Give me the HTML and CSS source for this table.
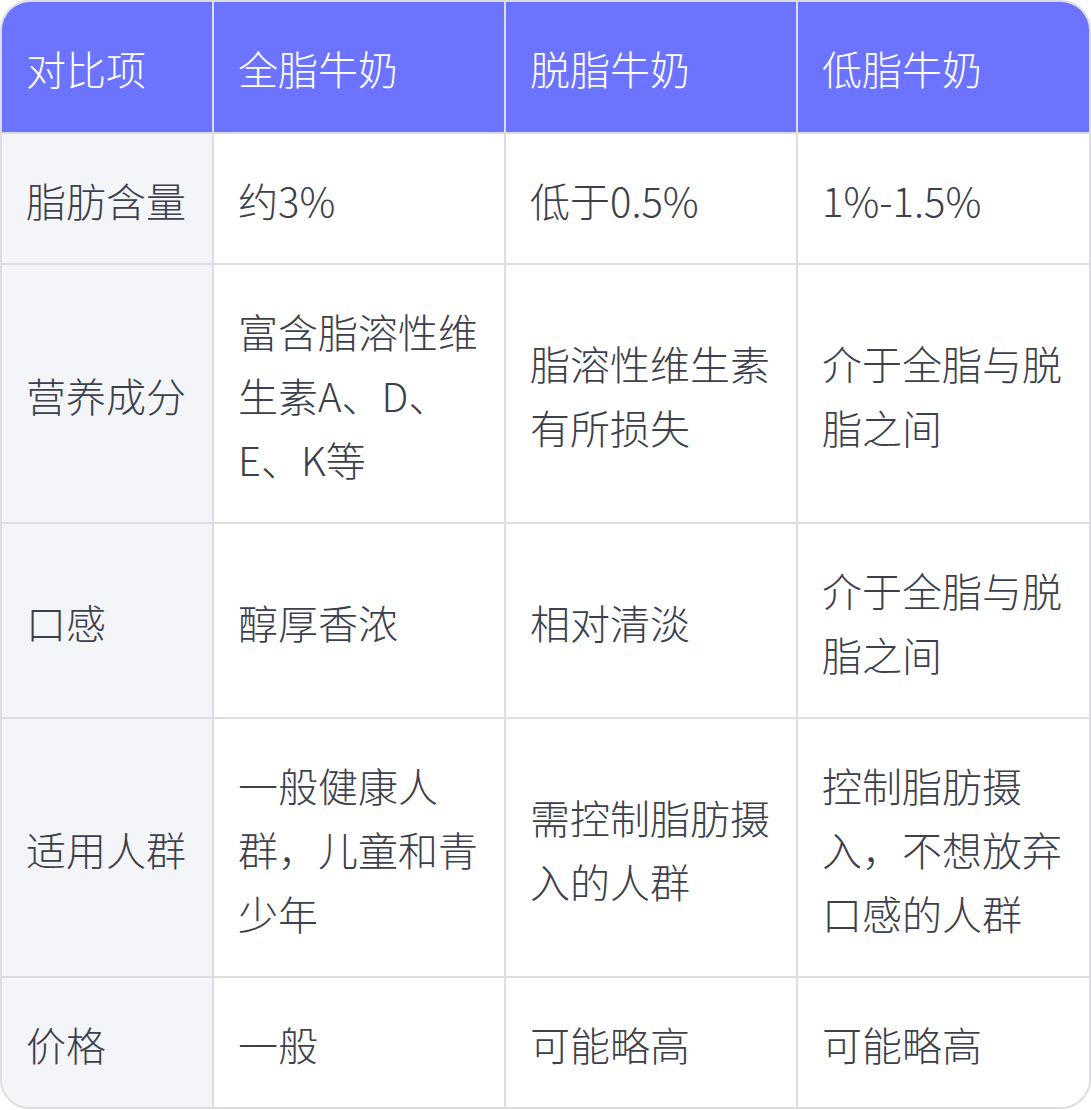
FILE: index.html
```html
<!DOCTYPE html>
<html lang="zh-CN">
<head>
<meta charset="utf-8">
<link rel="stylesheet" href="styles.css">
</head>
<body>
<div class="table">
  <div class="cell head">对比项</div>
  <div class="cell head">全脂牛奶</div>
  <div class="cell head">脱脂牛奶</div>
  <div class="cell head last-col">低脂牛奶</div>

  <div class="cell label">脂肪含量</div>
  <div class="cell">约3%</div>
  <div class="cell">低于0.5%</div>
  <div class="cell last-col">1%-1.5%</div>

  <div class="cell label">营养成分</div>
  <div class="cell">富含脂溶性维生素A、D、E、K等</div>
  <div class="cell">脂溶性维生素有所损失</div>
  <div class="cell last-col">介于全脂与脱脂之间</div>

  <div class="cell label">口感</div>
  <div class="cell">醇厚香浓</div>
  <div class="cell">相对清淡</div>
  <div class="cell last-col">介于全脂与脱脂之间</div>

  <div class="cell label">适用人群</div>
  <div class="cell">一般健康人群，儿童和青少年</div>
  <div class="cell">需控制脂肪摄入的人群</div>
  <div class="cell last-col">控制脂肪摄入，不想放弃口感的人群</div>

  <div class="cell label last-row">价格</div>
  <div class="cell last-row">一般</div>
  <div class="cell last-row">可能略高</div>
  <div class="cell last-row last-col">可能略高</div>
</div>
</body>
</html>
```

FILE: styles.css
```css
html, body {
  margin: 0;
  padding: 0;
  background: #ffffff;
}

.table {
  width: 1091px;
  box-sizing: border-box;
  display: grid;
  grid-template-columns: 212px 292px 292px 1fr;
  border: 2px solid #dcdde2;
  border-radius: 30px;
  overflow: hidden;
  font-family: "Noto Sans CJK SC Light", "Noto Sans CJK SC DemiLight", "Noto Sans CJK SC", "Noto Sans", sans-serif;
  font-weight: 300;
  font-size: 40px;
  line-height: 64px;
  color: #3c404c;
}

.cell {
  box-sizing: border-box;
  padding: 34px 24px 31px 24px;
  border-right: 2px solid #dcdde2;
  border-bottom: 2px solid #dcdde2;
  display: flex;
  align-items: center;
  background: #ffffff;
}

.head {
  background: #6c73ff;
  color: #ffffff;
  padding-bottom: 32px;
}

.label {
  background: #f4f5f9;
}

.last-col {
  border-right: none;
}

.last-row {
  border-bottom: none;
}
```
